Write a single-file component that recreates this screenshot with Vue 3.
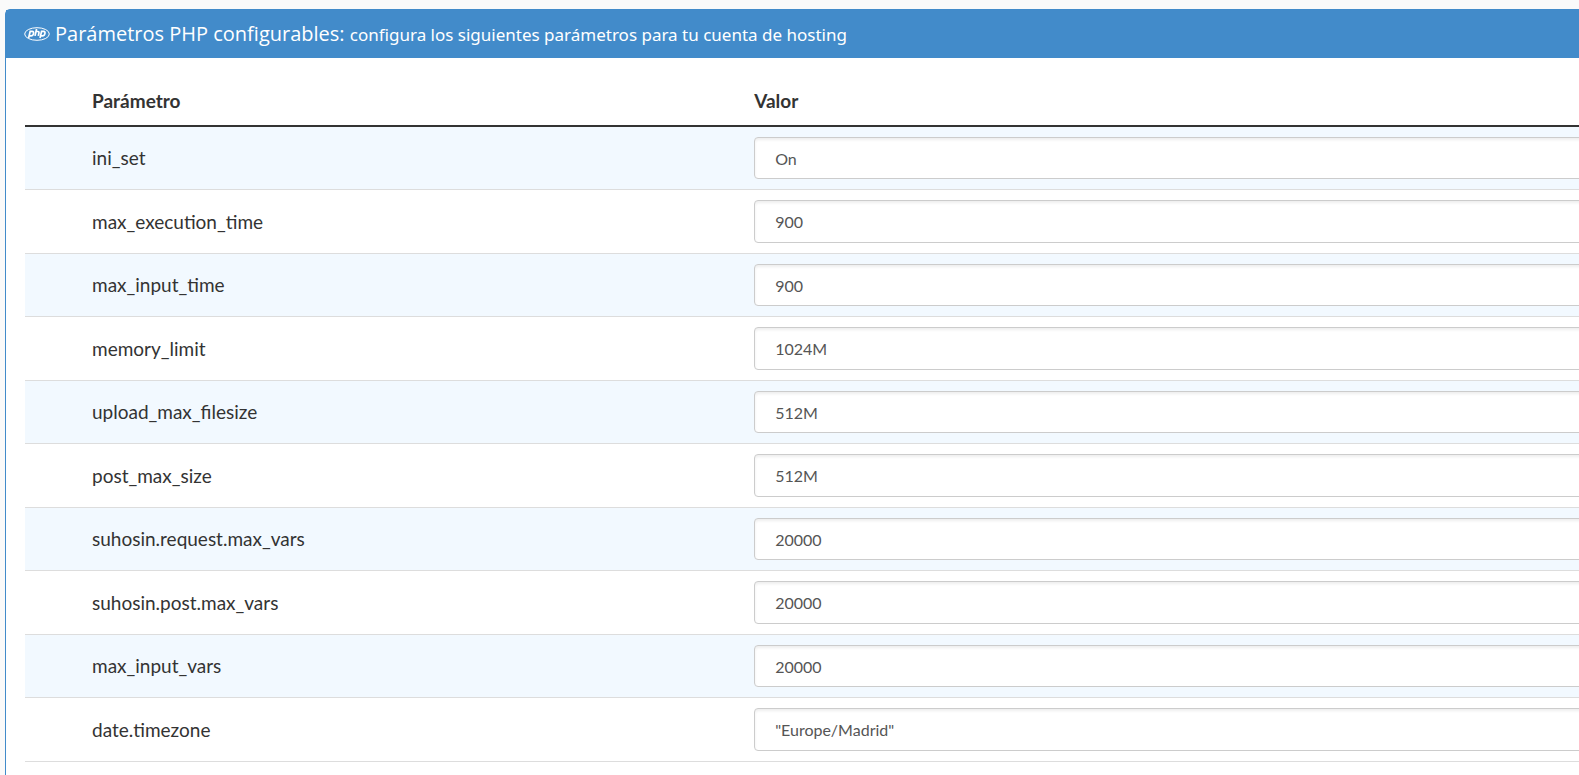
<script setup>
import { ref } from 'vue'

const params = ref([
  { name: 'ini_set', value: 'On' },
  { name: 'max_execution_time', value: '900' },
  { name: 'max_input_time', value: '900' },
  { name: 'memory_limit', value: '1024M' },
  { name: 'upload_max_filesize', value: '512M' },
  { name: 'post_max_size', value: '512M' },
  { name: 'suhosin.request.max_vars', value: '20000' },
  { name: 'suhosin.post.max_vars', value: '20000' },
  { name: 'max_input_vars', value: '20000' },
  { name: 'date.timezone', value: '"Europe/Madrid"' }
])
</script>

<template>
  <main class="page">
    <section class="panel">
      <header class="panel-head">
        <svg class="php-icon" viewBox="0 0 26 14" aria-hidden="true">
          <ellipse cx="13" cy="7" rx="12.3" ry="6.3" />
          <g class="letters">
            <path d="M4.6 11 L6.2 4.4 H8.2 Q10 4.5 9.5 6.6 Q9 8.8 7 8.8 H5.4" />
            <path d="M12.6 2 L11 8.9 M12.1 4.5 H13.9 Q15.3 4.6 14.9 6.2 L14.3 8.9" />
            <path d="M16 11 L17.6 4.4 H19.6 Q21.4 4.5 20.9 6.6 Q20.4 8.8 18.4 8.8 H16.8" />
          </g>
        </svg>
        <h1 class="title">Parámetros PHP configurables: <small>configura los siguientes parámetros para tu cuenta de hosting</small></h1>
      </header>
      <div class="panel-body">
        <table class="params">
          <colgroup>
            <col class="col-mark" />
            <col class="col-name" />
            <col />
          </colgroup>
          <thead>
            <tr>
              <td></td>
              <th scope="col">Parámetro</th>
              <th scope="col">Valor</th>
            </tr>
          </thead>
          <tbody>
            <tr v-for="(p, i) in params" :key="p.name">
              <td></td>
              <td><label :for="'param-' + i">{{ p.name }}</label></td>
              <td><input :id="'param-' + i" v-model="p.value" class="field" type="text" /></td>
            </tr>
          </tbody>
        </table>
      </div>
    </section>
  </main>
</template>

<style>
body {
  margin: 0;
  background: #fafafa;
}
</style>

<style scoped>
.page {
  padding: 9px 0 0 5px;
  height: 100vh;
  box-sizing: border-box;
  overflow: hidden;
  font-family: Lato, "Open Sans", sans-serif;
  color: #333;
}
.panel {
  width: calc(100% + 81px);
  min-height: 100%;
  box-sizing: border-box;
  border: 1px solid #428bca;
  border-radius: 5px;
  background: #fff;
}
.panel-head {
  display: flex;
  align-items: center;
  gap: 5px;
  height: 48px;
  padding: 0 18px;
  background: #428bca;
  color: #fff;
}
.php-icon {
  width: 26px;
  height: 14px;
  fill: none;
  stroke: #fff;
  stroke-width: 1;
}
.letters {
  stroke-width: 1.7;
}
.title {
  margin: 0;
  font: 400 20px/26px "Open Sans", sans-serif;
  white-space: nowrap;
}
.title small {
  font-family: "Noto Sans", "Open Sans", sans-serif;
  font-size: 17px;
}
.panel-body {
  padding: 19px;
}
.params {
  width: 100%;
  border-collapse: separate;
  border-spacing: 0;
  table-layout: fixed;
  font-size: 19px;
  line-height: 26px;
}
.col-mark {
  width: 67px;
}
.col-name {
  width: 41%;
}
td,
th {
  padding: 0;
  text-align: left;
  vertical-align: middle;
}
thead td,
thead th {
  height: 48px;
  border-bottom: 2px solid #333;
}
tbody td {
  padding: 10px 0;
  border-bottom: 1px solid #ddd;
}
tbody tr:nth-child(odd) {
  background: #f2f9ff;
}
.field {
  display: block;
  width: 96%;
  height: 42px;
  box-sizing: border-box;
  padding: 0 20px;
  border: 1px solid #ccc;
  border-radius: 4px;
  background: #fff;
  box-shadow: inset 0 2px 3px rgba(0, 0, 0, 0.07);
  color: #555;
  font: 400 16px/24px Lato, "Open Sans", sans-serif;
}
tr:nth-child(even) .field {
  height: 43px;
}
</style>
